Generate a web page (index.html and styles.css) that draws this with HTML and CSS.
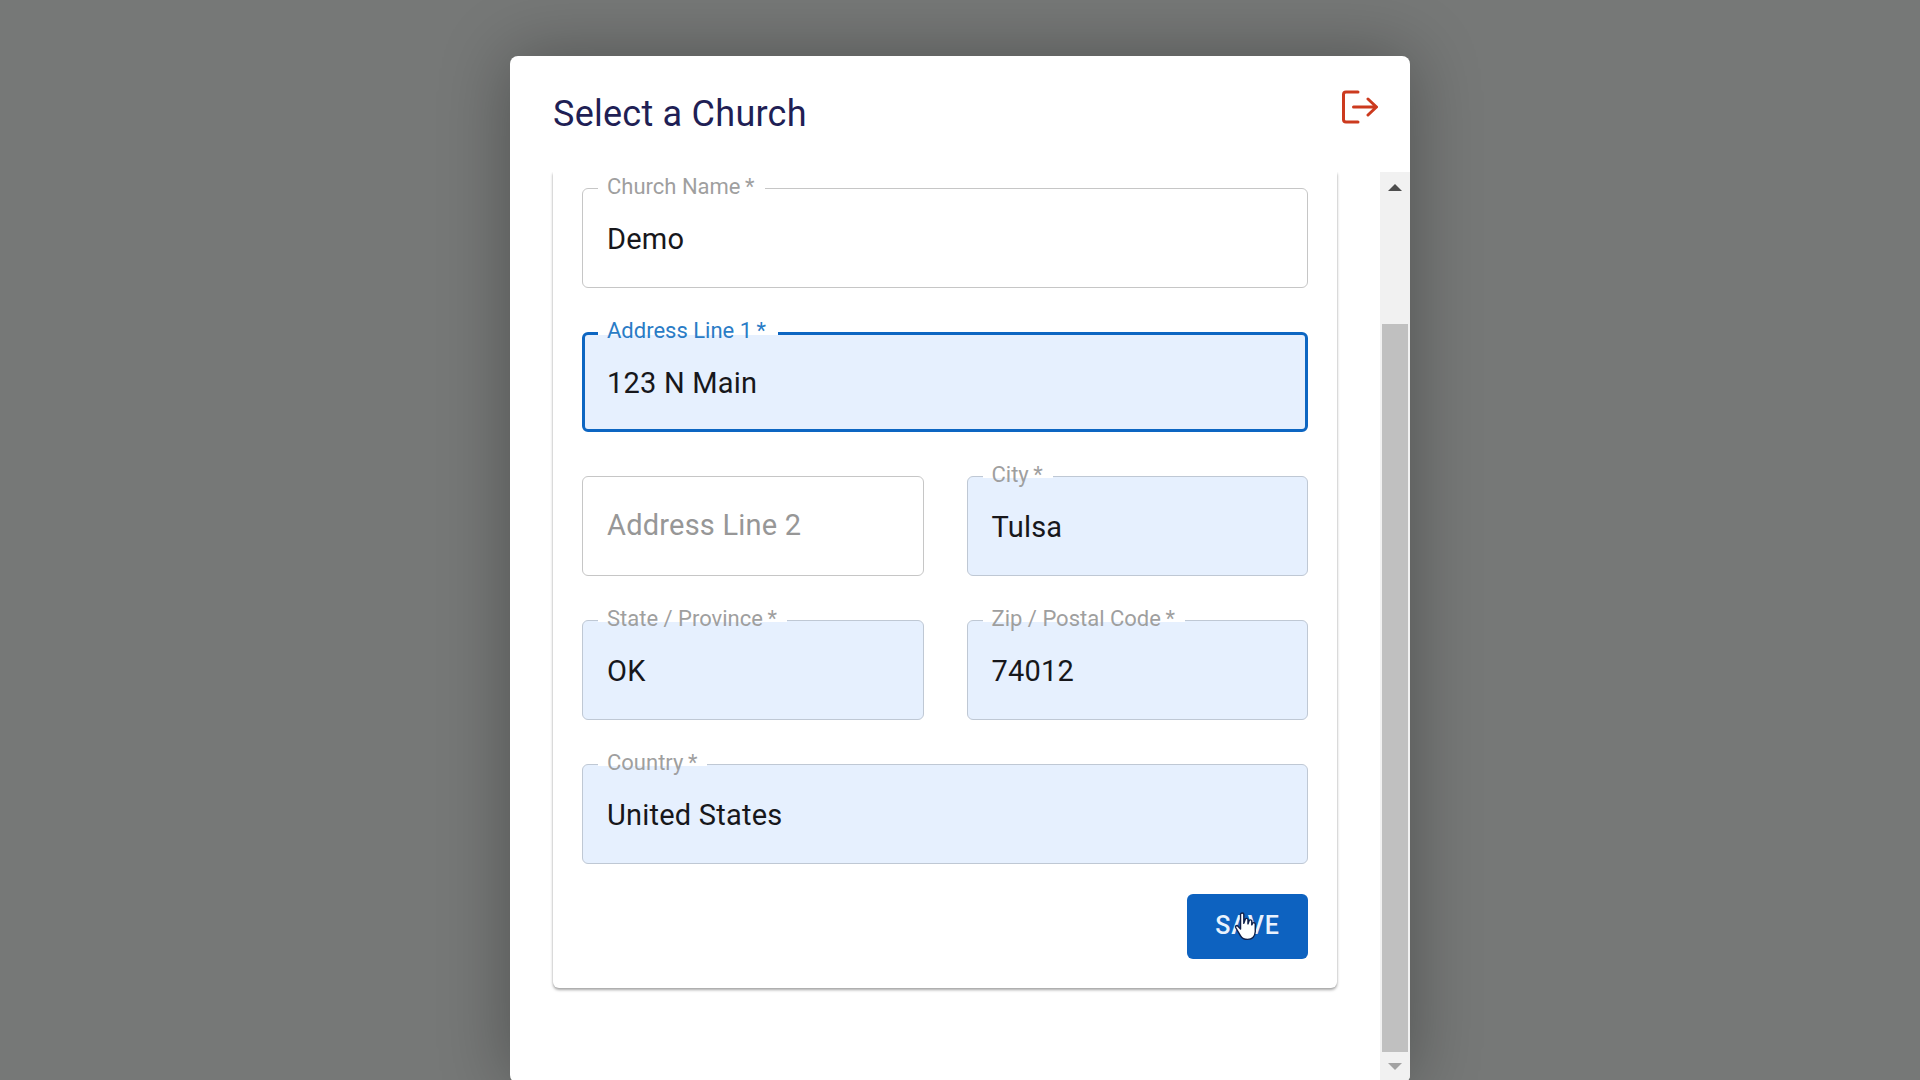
FILE: index.html
```html
<!DOCTYPE html>
<html>
<head>
  <title>Select a Church</title>
  <link rel="stylesheet" href="styles.css">
</head>
<body>
  <div class="modal">
    <div class="modal-head">
      <h2>Select a Church</h2>
      <svg class="logout" width="38" height="38" viewBox="0 0 38 38" fill="none" stroke="#cc3a1e" stroke-width="3" stroke-linecap="round" stroke-linejoin="round">
        <path d="M18 4H6Q3.500 4 3.500 6.500V31.500Q3.500 34 6 34H18"></path>
        <path d="M13.500 19H36M28 11L36.500 19L28 27"></path>
      </svg>
    </div>
    <div class="modal-body">
      <div class="scroll-area">
        <div class="card">
          <div class="field">
            <span class="label">Church Name&thinsp;*</span>
            <span class="value">Demo</span>
          </div>
          <div class="field focused">
            <span class="label">Address Line 1&thinsp;*</span>
            <span class="value">123 N Main</span>
          </div>
          <div class="row">
            <div class="field empty">
              <span class="value">Address Line 2</span>
            </div>
            <div class="field filled">
              <span class="label">City&thinsp;*</span>
              <span class="value">Tulsa</span>
            </div>
          </div>
          <div class="row">
            <div class="field filled">
              <span class="label">State / Province&thinsp;*</span>
              <span class="value">OK</span>
            </div>
            <div class="field filled">
              <span class="label">Zip / Postal Code&thinsp;*</span>
              <span class="value">74012</span>
            </div>
          </div>
          <div class="field filled">
            <span class="label">Country&thinsp;*</span>
            <span class="value">United States</span>
          </div>
          <div class="actions">
            <button class="save">SAVE
              <svg class="cursor" width="24" height="29" viewBox="0 0 22 28" preserveAspectRatio="none">
                <path d="M6 2.500Q6 1 7.500 1T9 2.500V11L10.500 6.500Q12 5.500 12.800 7V11.500L14 8Q15.500 7 16.300 8.500V12.500L17.300 10.500Q19 9.800 19.500 11.500V19Q19 26 12.500 26.500Q8 26.500 6 23L1.500 15Q1 13 3 13L6 16.500Z" fill="#fff" stroke="#10204a" stroke-width="1.300" stroke-linejoin="round"></path>
              </svg>
            </button>
          </div>
        </div>
      </div>
      <div class="scrollbar">
        <div class="arrow up"></div>
        <div class="track"><div class="thumb"></div></div>
        <div class="arrow down"></div>
      </div>
    </div>
  </div>
</body>
</html>
```

FILE: styles.css
```css
html, body { height: 100%; margin: 0; }
body {
  font-family: Roboto, "Liberation Sans", sans-serif;
  background: #767877;
  overflow: hidden;
  display: flex;
  justify-content: center;
  padding-top: 56px;
  box-sizing: border-box;
}
.modal {
  width: 900px;
  height: 1027px;
  background: #fff;
  border-radius: 8px;
  box-shadow: 0 0 70px rgba(0, 0, 0, 0.32);
  display: flex;
  flex-direction: column;
  flex-shrink: 0;
  overflow: hidden;
}
.modal-head {
  height: 116px;
  flex-shrink: 0;
  padding: 0 32px 0 43px;
  display: flex;
  justify-content: space-between;
  align-items: flex-start;
}
.modal-head h2 {
  margin: 36px 0 0;
  font-size: 36px;
  line-height: 44px;
  font-weight: 400;
  letter-spacing: 0.25px;
  color: #1f1f55;
}
.logout { margin-top: 32px; }
.modal-body { flex: 1; display: flex; min-height: 0; }
.scroll-area { flex: 1; padding: 0 43px; overflow: hidden; }
.card {
  height: 816px;
  box-sizing: border-box;
  padding: 16px 29px 0 29px;
  background: #fff;
  border-radius: 0 0 6px 6px;
  box-shadow: 0 2px 3px rgba(0, 0, 0, 0.35), 0 0 2px rgba(0, 0, 0, 0.09);
}
.field {
  position: relative;
  height: 100px;
  box-sizing: border-box;
  margin-bottom: 44px;
  padding: 0 24px;
  border: 1.500px solid #c6c6c6;
  border-radius: 6px;
  display: flex;
  align-items: center;
  flex: 1;
}
.label {
  position: absolute;
  top: -15px;
  left: 15px;
  padding: 0 10px 0 9px;
  font-size: 22px;
  line-height: 26px;
  color: #9f9f9f;
  background: linear-gradient(#fff 60%, transparent 60%);
}
.value {
  font-size: 29px;
  letter-spacing: 0.22px;
  color: #17171b;
  padding-top: 2px;
}
.filled { background: #e6f0fe; border-color: #bfc8d4; }
.empty .value { color: #979797; padding-top: 0; margin-top: -3px; }
.focused { background: #e6f0fe; border: 3px solid #0d66c2; }
.focused .label { color: #2a7cc6; left: 13px; top: -17px; padding-right: 12px; background: linear-gradient(#fff 65%, transparent 65%); }
.focused .value { margin-left: -2px; }
.row { display: flex; gap: 43px; }
.actions { display: flex; justify-content: flex-end; margin-top: -14px; }
.save {
  position: relative;
  width: 121px;
  height: 65px;
  padding-bottom: 3px;
  border: 0;
  border-radius: 6px;
  background: #0d62c0;
  color: #e9f2fd;
  font-family: inherit;
  font-size: 25px;
  font-weight: 500;
  letter-spacing: 0.9px;
}
.cursor { position: absolute; left: 47px; top: 18px; }
.scrollbar {
  width: 30px;
  background: #f1f1f1;
  display: flex;
  flex-direction: column;
}
.arrow { height: 30px; flex-shrink: 0; display: flex; align-items: center; justify-content: center; }
.arrow::before { content: ""; border-left: 7px solid transparent; border-right: 7px solid transparent; }
.up::before { border-bottom: 7px solid #4d4d4d; }
.down { height: 31px; }
.down::before { border-top: 7px solid #a3a3a3; margin-bottom: 3px; }
.track { flex: 1; padding-top: 122px; display: flex; }
.thumb { flex: 1; background: #c0c0c0; margin: 0 2px; }
```
